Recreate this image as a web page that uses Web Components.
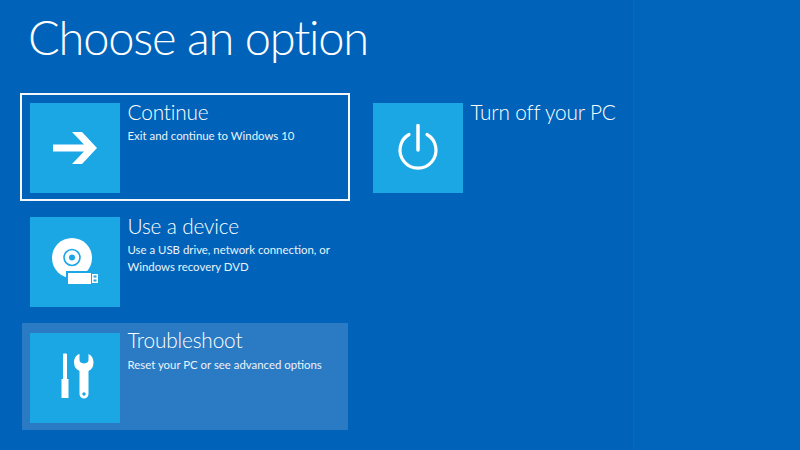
<!DOCTYPE html>
<html><head><meta charset="utf-8"><style>
html,body{margin:0;padding:0;background:#0063b9}
</style></head><body>
<template id="opt-tpl"><style>
:host{display:flex;box-sizing:border-box;width:var(--w,330px);height:108px;padding:10px 8px 10px 10px;gap:7.5px;color:#fff;font-family:Lato,sans-serif}
:host([selected]){outline:2px solid #f4f8fb;outline-offset:-2px}
:host([hover]){background:#2a7bc4;width:326px;margin-left:2px;padding-left:8px;height:107px}
:host([hover]) .txt{margin-top:-5px}
:host([hover]) .d{margin-top:3.5px}
.tile{flex:none;width:90px;height:90px;background:#1ba7e4;display:flex;align-items:center;justify-content:center}
.txt{min-width:0;margin-top:-3px}
.t{font-size:20.8px;font-weight:300;line-height:24px;white-space:nowrap;letter-spacing:-.15px}
.d{font-size:11.4px;font-weight:400;line-height:17px;margin-top:2.5px;color:#eaf3fa;white-space:nowrap}
svg{display:block}
</style><div class="tile"><slot name="icon"></slot></div><div class="txt"><div class="t"><slot name="title"></slot></div><div class="d"><slot name="desc"></slot></div></div></template>
<template id="screen-tpl"><style>
:host{display:block;width:800px;height:450px;overflow:hidden;box-sizing:border-box;padding:0 0 0 20px;background:linear-gradient(90deg,#0063b9 0,#0063b9 633px,#0a68bb 633px,#0a68bb 634px,#0065bb 634px)}
h1{margin:0;height:93px;box-sizing:border-box;padding:9px 0 0 8px;font:300 47px/57px Lato,sans-serif;letter-spacing:-1.2px;color:#fff}
.cols{display:flex;gap:13px}
.col{display:flex;flex-direction:column}
::slotted(.l2){margin-top:6px}
::slotted(.l3){margin-top:8px}
</style><h1><slot name="heading"></slot></h1><div class="cols"><div class="col"><slot name="left"></slot></div><div class="col"><slot name="right"></slot></div></div></template>
<boot-screen>
<span slot="heading">Choose an option</span>
<boot-option slot="left" selected>
<svg slot="icon" width="44" height="32" viewBox="0 0 44 32" fill="#fff"><path d="M0 12.500H31L19 0H29L44 16 29 32H19L31 19.500H0z"/></svg>
<span slot="title">Continue</span><span slot="desc">Exit and continue to Windows 10</span></boot-option>
<boot-option slot="left" class="l2">
<svg slot="icon" width="50" height="50" viewBox="0 0 50 50"><circle cx="22" cy="21" r="20" fill="#fff"/><circle cx="22" cy="20.500" r="8" fill="none" stroke="#1ba7e4" stroke-width="1.600"/><circle cx="22" cy="20.500" r="3" fill="#1ba7e4"/><rect x="16" y="34" width="34" height="14" fill="#1ba7e4"/><rect x="18" y="36" width="23" height="11" fill="#fff"/><rect x="42" y="37" width="6" height="9" fill="#fff"/><path fill="#1ba7e4" d="M43.500 38.500h3v2h-3zM43.500 42.500h3v2h-3z"/></svg>
<span slot="title">Use a device</span><span slot="desc">Use a USB drive, network connection, or<br>Windows recovery DVD</span></boot-option>
<boot-option slot="left" class="l3" hover>
<svg slot="icon" width="40" height="50" viewBox="0 0 40 50" fill="#fff"><path d="M8 1.500Q8 .5 9 .5h2q1 0 1 1V26h1.500V45H6.500V26H8z"/><path fill-rule="evenodd" d="M24 1C20.500 2.500 19 6 19 9.500 19 13.500 21 16.500 24.500 18V41a4.500 4.500 0 0 0 9 0V18C37 16.500 38.500 13.500 38.500 9.500 38.500 6 37 2.500 33.500 1V7Q33.500 10 29 10.500 24.500 10 24.500 7V1zM29 39.300a1.700 1.700 0 1 0 0 3.400 1.700 1.700 0 0 0 0-3.400z"/></svg>
<span slot="title">Troubleshoot</span><span slot="desc">Reset your PC or see advanced options</span></boot-option>
<boot-option slot="right" style="--w:250px">
<svg slot="icon" width="44" height="48" viewBox="0 0 44 48" fill="none" stroke="#fff" stroke-linecap="round"><path stroke-width="3.500" d="M22 1.500V26"/><path stroke-width="3.200" d="M13 10.500a18 18 0 1 0 18 0"/></svg>
<span slot="title">Turn off your PC</span></boot-option>
</boot-screen>
<script>
class BootOption extends HTMLElement{constructor(){super();this.attachShadow({mode:"open"}).appendChild(document.getElementById("opt-tpl").content.cloneNode(true));}}
class BootScreen extends HTMLElement{constructor(){super();this.attachShadow({mode:"open"}).appendChild(document.getElementById("screen-tpl").content.cloneNode(true));}}
customElements.define("boot-option",BootOption);customElements.define("boot-screen",BootScreen);
</script>
</body></html>
